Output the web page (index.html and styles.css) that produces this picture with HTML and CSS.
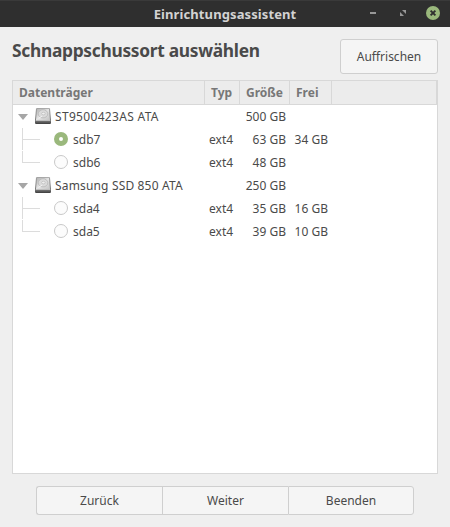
FILE: index.html
```html
<!DOCTYPE html>
<html lang="de">
<head>
<meta charset="utf-8">
<title>Einrichtungsassistent</title>
<link rel="stylesheet" href="styles.css">
</head>
<body>
<svg class="defs" width="0" height="0" aria-hidden="true">
  <defs>
    <linearGradient id="top" x1="0" y1="0" x2="1" y2="1">
      <stop offset="0" stop-color="#b0b0b0"/><stop offset=".5" stop-color="#e4e4e4"/><stop offset="1" stop-color="#c4c4c4"/>
    </linearGradient>
    <linearGradient id="front" x1="0" y1="0" x2="0" y2="1">
      <stop offset="0" stop-color="#a0a0a0"/><stop offset=".8" stop-color="#777"/><stop offset="1" stop-color="#3c3c3c"/>
    </linearGradient>
  </defs>
  <symbol id="disk" viewBox="0 0 16 16">
    <path d="M1.8 0h12.4l.8.8 1 11.2v3.2l-.8.8H.8l-.8-.8V12L1 .8z" fill="url(#front)"/>
    <path d="M2 .8h12l1 11.2H1z" fill="url(#top)"/>
    <ellipse cx="8" cy="5.8" rx="4.8" ry="4.1" fill="#dadada" stroke="#b2b2b2" stroke-width=".7"/>
    <ellipse cx="8.4" cy="5.6" rx="1.8" ry="1.3" fill="#eee" stroke="#b4b4b4" stroke-width=".6"/>
    <path d="M3.6 10.4l3.6-2.4" stroke="#f4f4f4"/>
    <path d="M.8 12.5h14.4" stroke="#d0d0d0" stroke-width=".8"/>
  </symbol>
</svg>
<div class="window">
  <header class="titlebar">
    <h1 class="title">Einrichtungsassistent</h1>
    <div class="controls">
      <svg width="14" height="14" viewBox="0 0 14 14"><path d="M4 6h6v2H4z" fill="#979797"/></svg>
      <svg width="14" height="14" viewBox="0 0 14 14"><path d="M6 4h4v4zM4 6v4h4z" fill="#979797"/></svg>
      <svg width="14" height="14" viewBox="0 0 14 14"><circle cx="7" cy="7" r="7" fill="#9ab87c"/><path d="M4.6 4.6l4.8 4.8M9.4 4.6L4.6 9.4" stroke="#2f2f2f" stroke-width="1.9"/></svg>
    </div>
  </header>
  <main class="content">
    <div class="heading">
      <h2>Schnappschussort auswählen</h2>
      <button class="refresh">Auffrischen</button>
    </div>
    <div class="tree">
      <div class="row head"><span>Datenträger</span><span>Typ</span><span>Größe</span><span>Frei</span><span></span></div>
      <div class="row"><span class="device model"><i class="arrow"></i><svg class="disk" width="16" height="16"><use href="#disk"/></svg>ST9500423AS ATA</span><span></span><span class="num">500 GB</span><span></span></div>
      <div class="row"><span class="part"><i class="branch"></i><i class="radio on"></i>sdb7</span><span class="type">ext4</span><span class="num">63 GB</span><span class="num">34 GB</span></div>
      <div class="row"><span class="part"><i class="branch last"></i><i class="radio"></i>sdb6</span><span class="type">ext4</span><span class="num">48 GB</span><span></span></div>
      <div class="row"><span class="device"><i class="arrow"></i><svg class="disk" width="16" height="16"><use href="#disk"/></svg>Samsung SSD 850 ATA</span><span></span><span class="num">250 GB</span><span></span></div>
      <div class="row"><span class="part"><i class="branch"></i><i class="radio"></i>sda4</span><span class="type">ext4</span><span class="num">35 GB</span><span class="num">16 GB</span></div>
      <div class="row"><span class="part"><i class="branch last"></i><i class="radio"></i>sda5</span><span class="type">ext4</span><span class="num">39 GB</span><span class="num">10 GB</span></div>
    </div>
    <footer class="actions"><button>Zurück</button><button>Weiter</button><button>Beenden</button></footer>
  </main>
</div>
</body>
</html>
```
FILE: styles.css
```css
* { box-sizing: border-box; }
body { margin: 0; background: #efefef; color: #4a4a4a; font: 12px/23px "Noto Sans", sans-serif; }
.defs { display: block; }
.window { height: 527px; display: flex; flex-direction: column; }
.titlebar { height: 27px; display: grid; grid-template-columns: 1fr auto; background: #2f2f2f; border-top: 1px solid #3a3a3a; }
.title { grid-area: 1 / 1 / 2 / 3; margin: 0; text-align: center; font-size: 13px; line-height: 27px; letter-spacing: .1px; color: #d3d3d3; }
.controls { grid-area: 1 / 2; display: flex; gap: 16px; padding: 5px 10px 0 0; }
.controls svg { display: block; }
.content { flex: 1; display: flex; flex-direction: column; padding: 12px 12px 12px; }
.heading { display: flex; justify-content: space-between; height: 35px; margin-bottom: 6px; }
h2 { margin: 0; font-size: 17.33px; line-height: 22px; letter-spacing: -.28px; white-space: nowrap; }
button { margin: 0; padding: 0; font: inherit; color: inherit; background: #f5f5f5; border: 1px solid #cfcfcf; }
.refresh { width: 98px; border-radius: 3px; }
.tree { height: 394px; background: #fff; border: 1px solid #d8d8d8; }
.row { display: grid; grid-template-columns: 192px 35px 50px 42px 1fr; height: 23px; white-space: nowrap; }
.head { height: 24px; background: #ececec; border-bottom: 1px solid #d8d8d8; font-weight: bold; color: #777; }
.head span { padding-left: 6px; border-right: 1px solid #d8d8d8; }
.device, .part { display: flex; align-items: center; }
.device { letter-spacing: .16px; }
.model { letter-spacing: .32px; }
.arrow { margin-left: 5px; border: 5px solid transparent; border-top: 6px solid #a6a6a6; border-bottom: 0; }
.disk { margin: 0 4px 1px 7px; }
.branch { align-self: stretch; width: 18px; margin-left: 9px; background: linear-gradient(#dcdcdc, #dcdcdc) 0 0 / 1px 22px no-repeat, linear-gradient(#dcdcdc, #dcdcdc) 0 11px / 18px 1px no-repeat; }
.branch.last { background-size: 1px 12px, 18px 1px; }
.radio { width: 14px; height: 14px; margin: 0 5px 1px 14px; border: 1px solid #c9c9c9; border-radius: 50%; background: #fcfcfc; }
.radio.on { border: 5px solid #9ab87c; background: #fff; }
.type { padding-left: 4px; }
.num { padding-right: 4px; text-align: right; }
.actions { display: flex; height: 29px; margin: 12px 24px 0; }
.actions button { width: 126px; border-right: 0; }
.actions button:first-child { border-radius: 3px 0 0 3px; }
.actions button:last-child { border-right: 1px solid #cfcfcf; border-radius: 0 3px 3px 0; }
```
